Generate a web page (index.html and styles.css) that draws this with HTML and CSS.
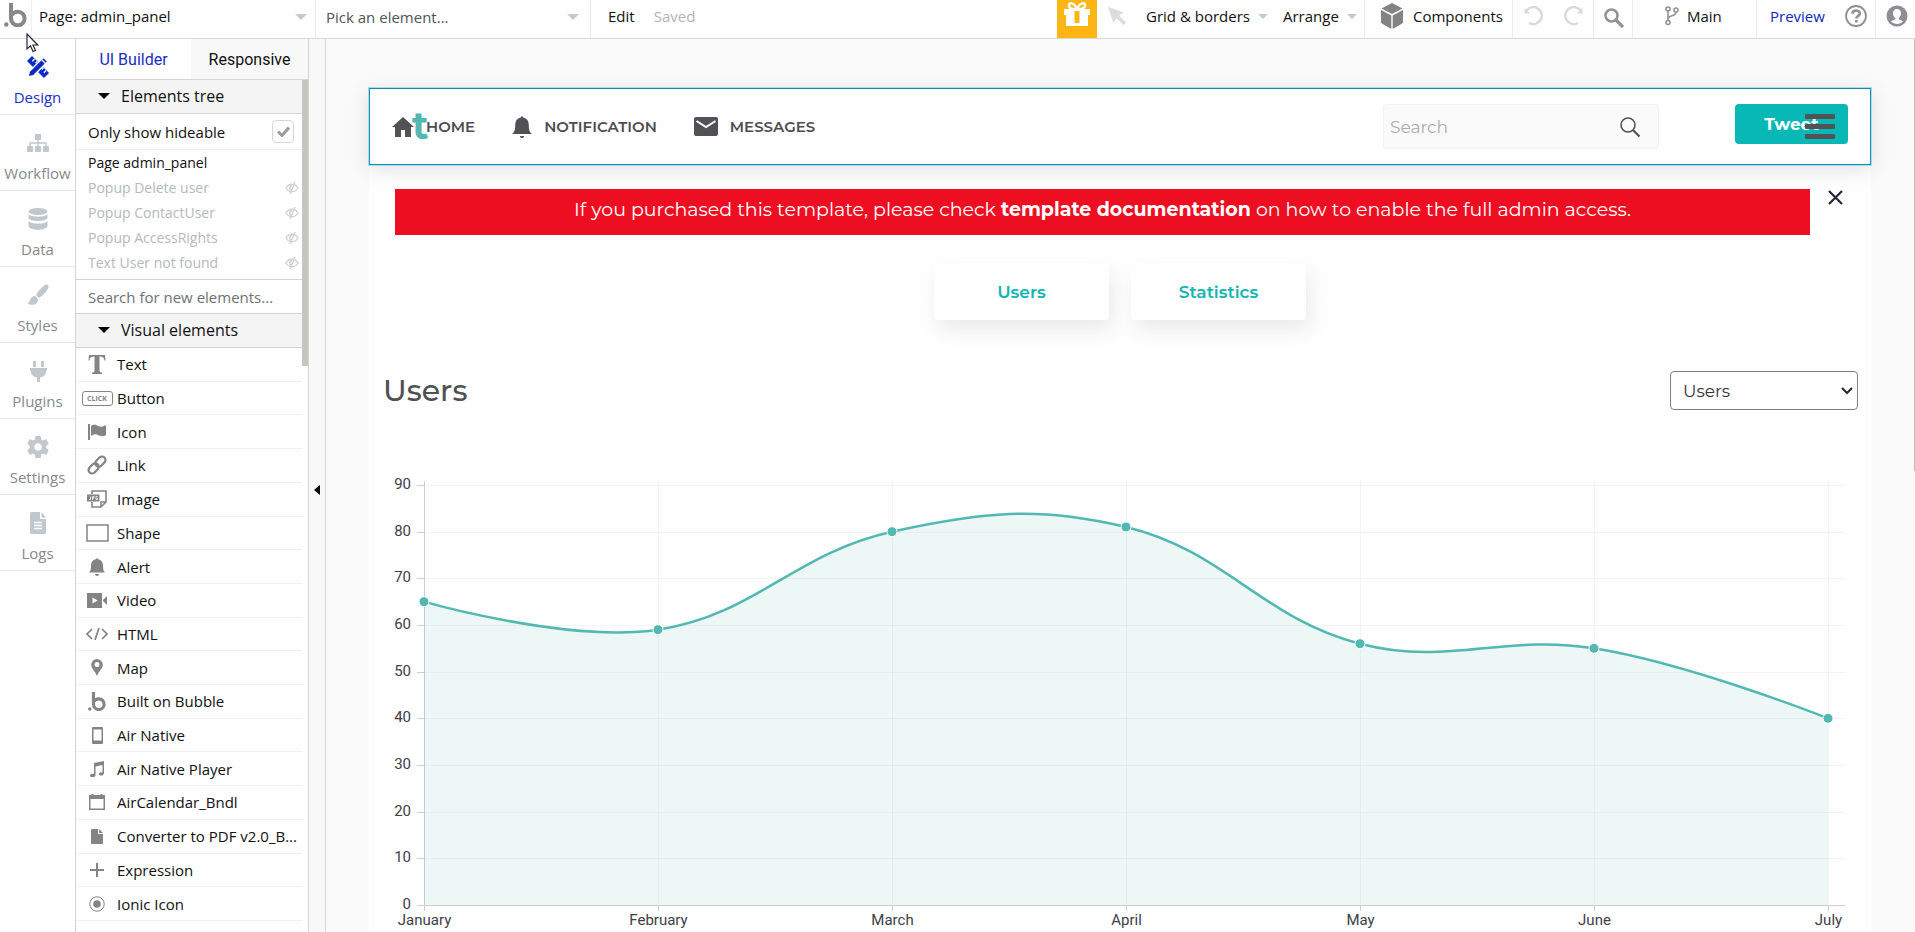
FILE: index.html
```
<!DOCTYPE html>
<html lang="en">
<head>
  <meta charset="UTF-8">
  <meta name="viewport" content="width=device-width, initial-scale=1.0">
  <title>admin_panel | Bubble Editor</title>
  <link rel="stylesheet" href="styles.css">
</head>
<body>

  <!-- Top bar -->
  <header class="topbar">
    <a href="#" class="logo" aria-label="Bubble">
      <svg width="23" height="24" viewBox="0 0 23 24"><circle cx="2.300" cy="21.500" r="2.200" fill="#8a8785"/><path d="M7 0v15.500a6.800 6.800 0 1 0 6.800-6.800c-3 0-5 1.500-6 3.500" fill="none" stroke="#8a8785" stroke-width="4"/></svg>
    </a>
    <div class="dropdown page-select">
      <select aria-label="Page"><option>Page: admin_panel</option></select>
    </div>
    <div class="dropdown element-select">
      <select aria-label="Element"><option>Pick an element...</option></select>
    </div>
    <button class="edit">Edit</button>
    <span class="saved">Saved</span>

    <div class="topbar-right">
      <button class="gift" aria-label="Gift">
        <svg width="28" height="28" viewBox="0 0 28 28"><g fill="#fff"><path d="M1 8h26v6H1zM3 14h22v11H3z"/></g><path d="M14 8C11 1 5 1 6 5s5 3 8 3 7 1 8-3-5-4-8 3z" fill="none" stroke="#fff" stroke-width="2.500"/><path d="M11.500 10h5v12h-5z" fill="#fdb515"/></svg>
      </button>
      <button class="pointer" aria-label="Select">
        <svg width="18" height="18" viewBox="0 0 18 18"><path d="M0 0l16 5.500-5 3 7 7-2.500 2.500-7-7-3 5z" fill="#dbdddc"/></svg>
      </button>
      <button class="menu grid-menu">Grid &amp; borders</button>
      <button class="menu arrange-menu">Arrange</button>
      <button class="components">
        <svg width="24" height="26" viewBox="0 0 24 26"><g fill="#858381"><path d="M12 0l10.500 5.500L12 11 1.500 5.500z"/><path d="M1 7l10.300 5.400V26L1 20z"/><path d="M23 7l-10.300 5.400V26L23 20z"/></g></svg>
        Components
      </button>
      <div class="history">
        <button aria-label="Undo"><svg width="20" height="20" viewBox="0 0 20 20"><path d="M2 5.200A8.500 8.500 0 1 1 5 17" fill="none" stroke="#d8dbda" stroke-width="2.500"/><path d="M.5 2v5.500H6z" fill="#d8dbda"/></svg></button>
        <button aria-label="Redo"><svg width="20" height="20" viewBox="0 0 20 20"><path d="M18 5.200A8.500 8.500 0 1 0 15 17" fill="none" stroke="#d8dbda" stroke-width="2.500"/><path d="M19.500 2v5.500H14z" fill="#d8dbda"/></svg></button>
      </div>
      <button class="find" aria-label="Find">
        <svg width="20" height="20" viewBox="0 0 20 20"><circle cx="7.500" cy="7.500" r="6" fill="none" stroke="#929296" stroke-width="2.500"/><path d="M12 12l7 7" stroke="#929296" stroke-width="3.200"/></svg>
      </button>
      <button class="branch">
        <svg width="14" height="20" viewBox="0 0 14 20"><g fill="none" stroke="#929296" stroke-width="1.600"><circle cx="3" cy="3" r="2"/><circle cx="3" cy="16.500" r="2"/><circle cx="11" cy="4" r="2"/><path d="M3 5v9.500M11 6c0 5-8 2.500-8 7.500"/></g></svg>
        Main
      </button>
      <a href="#" class="preview">Preview</a>
      <button class="help" aria-label="Help">
        <svg width="22" height="22" viewBox="0 0 22 22"><circle cx="11" cy="11" r="10" fill="none" stroke="#8e8e95" stroke-width="1.800"/><path d="M7.500 8.800c0-4.500 7.300-4.300 7.300-.3 0 2.700-3.500 2.500-3.500 5" fill="none" stroke="#8e8e95" stroke-width="2.600"/><path d="M10 15h2.700v2.500H10z" fill="#8e8e95"/></svg>
      </button>
      <button class="account" aria-label="Account">
        <svg width="22" height="22" viewBox="0 0 22 22"><circle cx="11" cy="11" r="10.500" fill="#8e8e95"/><path d="M11 4c-2.500 0-4 1.800-4 4.200 0 2 .9 3.800 2.200 4.600v1.400L5 16.200c1.500 1.700 3.600 2.800 6 2.800s4.500-1.100 6-2.800l-4.200-2v-1.400C14.100 12 15 10.200 15 8.200 15 5.800 13.500 4 11 4z" fill="#fff"/></svg>
      </button>
    </div>
  </header>

  <div class="workspace">
    <!-- Main navigation -->
    <nav class="sidenav">
      <a href="#" class="active">
        <svg width="22" height="22" viewBox="0 0 22 22"><path d="M5 0l17 17-5 5L0 5z" fill="#0b2bc6"/><path d="M7.500 3L5.300 5.200M10 5.500L8.500 7M19 14.500l-2.200 2.200M16.500 12L15 13.500" stroke="#fff" stroke-width="1.300"/><path d="M16.500 1.200l4.300 4.300L6.500 19.800 1 21l1.200-5.500z" fill="#0b2bc6" stroke="#fff" stroke-width="1.500"/><path d="M14.500 3.500l4 4" stroke="#fff" stroke-width="1.200"/></svg>
        Design
      </a>
      <a href="#">
        <svg width="22" height="22" viewBox="0 0 22 22"><path d="M8 2h6v6H8z"/><path d="M11 7v8M3 15v-4h16v4" fill="none" stroke="#c1c8cd" stroke-width="1.500"/><rect y="14" width="6" height="6" rx="1"/><rect x="8" y="14" width="6" height="6" rx="1"/><rect x="16" y="14" width="6" height="6" rx="1"/></svg>
        Workflow
      </a>
      <a href="#">
        <svg width="22" height="22" viewBox="0 0 22 22"><ellipse cx="11" cy="3.500" rx="9.500" ry="3.500"/><path d="M1.500 6c2 3.500 17 3.500 19 0v4c-1 4-18 4-19 0zM1.500 13c2 3.500 17 3.500 19 0v5c-1 5-18 5-19 0z"/></svg>
        Data
      </a>
      <a href="#">
        <svg width="22" height="22" viewBox="0 0 22 22"><path d="M18 1c2-1.500 4 0 3.500 2-.5 3-5 8-9.500 11l-3-3c2-4 6-8 9-10zM8 12l3.200 3.200C11 20 6 23 0 19c2 0 2.500-1 3-3s2.500-4 5-4z"/></svg>
        Styles
      </a>
      <a href="#">
        <svg width="22" height="22" viewBox="0 0 22 22"><path d="M6 1h3v6H6zM14 1h3v6h-3zM3 8h17v3h-1c0 4-2.500 6-6 6.500V22h-3v-4.500C6.500 17 4 15 4 11H3z"/></svg>
        Plugins
      </a>
      <a href="#">
        <svg width="22" height="22" viewBox="2 2 20 20"><path d="M19.430 12.980c.04-.32.070-.64.070-.98s-.03-.66-.07-.98l2.110-1.650c.19-.15.240-.42.120-.64l-2-3.460c-.12-.22-.39-.3-.61-.22l-2.490 1c-.52-.4-1.080-.73-1.690-.98l-.38-2.650C14.460 2.180 14.250 2 14 2h-4c-.25 0-.46.180-.49.420l-.38 2.650c-.61.250-1.170.59-1.690.98l-2.490-1c-.23-.09-.49 0-.61.220l-2 3.460c-.13.220-.07.490.12.640l2.110 1.650c-.04.320-.07.650-.07.980s.03.660.07.980l-2.110 1.650c-.19.150-.24.420-.12.640l2 3.460c.12.220.39.300.61.220l2.490-1c.52.400 1.080.730 1.690.980l.38 2.650c.03.240.24.420.49.420h4c.25 0 .46-.18.490-.42l.38-2.650c.61-.25 1.170-.59 1.690-.98l2.490 1c.23.090.49 0 .61-.22l2-3.460c.12-.22.070-.49-.12-.64zM12 15.500c-1.930 0-3.500-1.570-3.500-3.500s1.570-3.500 3.500-3.500 3.500 1.570 3.500 3.500-1.570 3.500-3.500 3.500z"/></svg>
        Settings
      </a>
      <a href="#">
        <svg width="22" height="22" viewBox="0 0 22 22"><path d="M4.500 0H13v7h6v13.500a1.500 1.500 0 0 1-1.500 1.500h-13A1.500 1.500 0 0 1 3 20.500v-19A1.500 1.500 0 0 1 4.500 0zM14.500 0L19 5.500h-4.500z"/><path d="M7 10.500h8M7 13.500h8M7 16.500h8" stroke="#fff" stroke-width="1.300"/></svg>
        Logs
      </a>
    </nav>

    <!-- Palette -->
    <aside class="palette">
      <div class="tabs">
        <button class="tab selected">UI Builder</button>
        <button class="tab">Responsive</button>
      </div>
      <div class="palette-scroll">
        <div class="palette-content">
          <h2 class="section-title">Elements tree</h2>
          <label class="hideable">
            Only show hideable
            <input type="checkbox" checked>
          </label>
          <ul class="tree">
            <li class="current">Page admin_panel</li>
            <li>Popup Delete user <svg width="14" height="12" viewBox="0 0 14 12"><use href="#eye"/></svg></li>
            <li>Popup ContactUser <svg width="14" height="12" viewBox="0 0 14 12"><use href="#eye"/></svg></li>
            <li>Popup AccessRights <svg width="14" height="12" viewBox="0 0 14 12"><use href="#eye"/></svg></li>
            <li>Text User not found <svg width="14" height="12" viewBox="0 0 14 12"><use href="#eye"/></svg></li>
          </ul>
          <input type="text" class="element-search" placeholder="Search for new elements..." aria-label="Search for new elements">
          <h2 class="section-title">Visual elements</h2>
          <ul class="elements">
            <li><span class="icon"><svg width="18" height="19" viewBox="0 0 18 19"><path d="M1 0h16l.5 5.500h-1C16 2.500 15 1.500 11.500 1.500v14c0 1.500.7 2 2.500 2V19H4v-1.500c1.800 0 2.500-.5 2.500-2v-14C3 1.500 2 2.500 1.500 5.500h-1z"/></svg></span>Text</li>
            <li><span class="icon"><b class="click">CLICK</b></span>Button</li>
            <li><span class="icon"><svg width="18" height="16" viewBox="0 0 18 16"><path d="M0 0h2v16H0zM3 2c3-2 5-1 7 0s5 1 8-1v10c-3 2-6 1-8 0s-4-1-7 1z"/></svg></span>Icon</li>
            <li><span class="icon"><svg width="20" height="20" viewBox="0 0 20 20"><g transform="rotate(-45 10 10)" fill="none" stroke="#868482" stroke-width="2.200"><rect x="-.5" y="6.500" width="11.500" height="7" rx="3.500"/><rect x="9" y="6.500" width="11.500" height="7" rx="3.500"/></g></svg></span>Link</li>
            <li><span class="icon"><svg width="20" height="18" viewBox="0 0 20 18"><path d="M5 4V1h14v11l-5 5H5v-5M19 12h-5v5" fill="none" stroke="#868482" stroke-width="1.600"/><path d="M0 4.500h12.500v7H0z"/><path d="M2 9.500h1.500v-3M5.500 10V6.500H7V8H5.500M10.500 6.500H9v3h1.500V8" fill="none" stroke="#fff" stroke-width=".8"/></svg></span>Image</li>
            <li><span class="icon"><svg width="23" height="18" viewBox="0 0 23 18"><rect x="1" y="1" width="21" height="16" fill="none" stroke="#868482" stroke-width="1.500"/></svg></span>Shape</li>
            <li><span class="icon"><svg width="16" height="18" viewBox="0 0 16 18"><path d="M8 0l1.200 1.300C12.500 2 14 4.500 14 7.500c0 4 .5 5.500 2 7H0c1.500-1.500 2-3 2-7 0-3 1.500-5.500 4.800-6.200zM6 16h4c0 2.500-4 2.500-4 0z"/></svg></span>Alert</li>
            <li><span class="icon"><svg width="20" height="15" viewBox="0 0 20 15"><path d="M0 0h15v15H0zM16 7l4-4v9l-4-4z"/><path d="M5.500 4.500v6l5-3z" fill="#fff"/></svg></span>Video</li>
            <li><span class="icon"><svg width="22" height="12" viewBox="0 0 22 12"><path d="M6 1L1 6l5 5M16 1l5 5-5 5M13 0L9 12" fill="none" stroke="#868482" stroke-width="1.700"/></svg></span>HTML</li>
            <li><span class="icon"><svg width="12" height="17" viewBox="0 0 12 17"><path fill-rule="evenodd" d="M6 0a5.800 5.800 0 0 1 5.800 5.800C11.800 9.500 8 12 6 17 4 12 .2 9.500.2 5.800A5.800 5.800 0 0 1 6 0zm0 3a2.500 2.500 0 1 0 0 5 2.500 2.500 0 0 0 0-5z"/></svg></span>Map</li>
            <li><span class="icon"><svg width="18" height="19" viewBox="0 0 23 24"><circle cx="2.300" cy="21.500" r="2.200"/><path d="M7 0v15.500a6.800 6.800 0 1 0 6.800-6.800c-3 0-5 1.500-6 3.500" fill="none" stroke="#868482" stroke-width="4"/></svg></span>Built on Bubble</li>
            <li><span class="icon"><svg width="11" height="17" viewBox="0 0 11 17"><path fill-rule="evenodd" d="M1 0h9a1 1 0 0 1 1 1v15a1 1 0 0 1-1 1H1a1 1 0 0 1-1-1V1a1 1 0 0 1 1-1zm.5 2.500v11h8v-11z"/></svg></span>Air Native</li>
            <li><span class="icon"><svg width="14" height="16" viewBox="0 0 14 16"><path d="M4 2l10-2v12c0 3-5 3.500-5 1 0-1.500 2-2 3.500-1.700V4L5.500 5.500V14c0 3-5.500 3-5.500.5 0-1.500 2-2.200 4-1.700z"/></svg></span>Air Native Player</li>
            <li><span class="icon"><svg width="16" height="16" viewBox="0 0 16 16"><path fill-rule="evenodd" d="M0 1h2.500V0h2v1h7V0h2v1H16v15H0zm1.500 4v9.500h13V5z"/></svg></span>AirCalendar_Bndl</li>
            <li><span class="icon"><svg width="12" height="15" viewBox="0 0 12 15"><path d="M1 0h6v5h5v9a1 1 0 0 1-1 1H1a1 1 0 0 1-1-1V1a1 1 0 0 1 1-1zM8 0l4 4H8z"/></svg></span>Converter to PDF v2.0_B...</li>
            <li><span class="icon"><svg width="14" height="14" viewBox="0 0 14 14"><path d="M6 0h2v6h6v2H8v6H6V8H0V6h6z"/></svg></span>Expression</li>
            <li><span class="icon"><svg width="16" height="16" viewBox="0 0 16 16"><circle cx="8" cy="8" r="7.200" fill="none" stroke="#868482"/><circle cx="8" cy="8" r="3.800"/></svg></span>Ionic Icon</li>
          </ul>
        </div>
        <div class="scrollbar"></div>
      </div>
    </aside>

    <button class="collapse" aria-label="Collapse panel"></button>

    <!-- Canvas -->
    <main class="canvas">
      <div class="page">
        <div class="page-header">
          <span class="brand">t</span>
          <a href="#" class="menu-link">
            <svg width="22" height="20" viewBox="0 0 22 20"><path d="M11 0l11 10h-3v10h-6v-7H9v7H3V10H0z"/></svg>
            HOME
          </a>
          <a href="#" class="menu-link">
            <svg width="20" height="22" viewBox="0 0 20 22"><path d="M10 0l1.400 1.600C15 2.500 16.800 5 16.800 9c0 5 .7 7 3.200 9H0c2.500-2 3.200-4 3.200-9 0-4 1.800-6.500 5.400-7.400zM8 20h4c0 2.700-4 2.700-4 0z"/></svg>
            NOTIFICATION
          </a>
          <a href="#" class="menu-link">
            <svg width="24" height="19" viewBox="0 0 24 19"><rect width="24" height="19" rx="2"/><path d="M2.500 4l9.500 6 9.500-6" fill="none" stroke="#fff" stroke-width="2"/></svg>
            MESSAGES
          </a>
          <div class="search">
            <input type="text" placeholder="Search" aria-label="Search">
            <svg width="20" height="20" viewBox="0 0 20 20"><circle cx="8" cy="8" r="7" fill="none" stroke="#505256" stroke-width="1.600"/><path d="M13 13l6.500 6.500" stroke="#505256" stroke-width="2.200"/></svg>
          </div>
          <div class="tweet-wrap">
            <button class="tweet">Tweet</button>
            <button class="burger" aria-label="Menu"><i></i><i></i><i></i></button>
          </div>
        </div>

        <div class="notice-row">
          <p class="notice">If you purchased this template, please check <strong>template documentation</strong> on how to enable the full admin access.</p>
          <button class="close" aria-label="Close">
            <svg width="15" height="15" viewBox="0 0 15 15"><path d="M1 1l13 13M14 1L1 14" stroke="#25263a" stroke-width="2.200"/></svg>
          </button>
        </div>

        <div class="view-buttons">
          <button>Users</button>
          <button>Statistics</button>
        </div>

        <div class="chart-head">
          <h1>Users</h1>
          <div class="metric">
            <select aria-label="Metric"><option>Users</option><option>Statistics</option></select>
            <svg width="12" height="8" viewBox="0 0 12 8"><path d="M1 1l5 5 5-5" fill="none" stroke="#2b2b3a" stroke-width="2.200"/></svg>
          </div>
        </div>

        <svg class="chart" id="chart" role="img" aria-label="Users per month"></svg>
      </div>
      <div class="canvas-scroll"></div>
    </main>
  </div>

  <!-- Mouse pointer -->
  <svg class="mouse" width="13" height="20" viewBox="0 0 13 20"><path d="M1 1v15l3.500-3.200L7 18.500l2.500-1-2.500-5.500h4.800z" fill="#fff" stroke="#25253a" stroke-width="1.200"/></svg>

  <svg class="defs" width="0" height="0">
    <defs>
      <g id="eye" fill="none" stroke="#cfd3d3" stroke-width="1.400"><path d="M1 6c3-5 9-5 12 0-3 5-9 5-12 0z"/><path d="M7 3.500c-3 .5-3 4.500 0 5M10 0L5 12"/></g>
    </defs>
  </svg>

  <script src="script.js"></script>
</body>
</html>
```
FILE: styles.css
```
* {
  box-sizing: border-box;
}
body {
  margin: 0;
  height: 100vh;
  display: flex;
  flex-direction: column;
  overflow: hidden;
  font-family: "Open Sans", sans-serif;
  font-size: 15px;
  color: #111;
  background-color: #fefefe;
}
button, input, select {
  font: inherit;
  color: inherit;
  border: none;
  background: none;
  margin: 0;
  padding: 0;
}
button {
  cursor: pointer;
}
a {
  color: inherit;
  text-decoration: none;
}
svg {
  display: block;
  flex: none;
}
ul {
  list-style: none;
  margin: 0;
  padding: 0;
}

/* Top bar */
.topbar {
  display: flex;
  flex: none;
  height: 39px;
  border-bottom: 1px solid #d8d8d8;
}
.topbar button,
.preview,
.saved {
  display: flex;
  align-items: center;
  white-space: nowrap;
  padding-bottom: 6px;
}
.logo {
  width: 32px;
  padding: 3px 4px;
  border-right: 1px solid #edf1f2;
}
.dropdown {
  position: relative;
  border-right: 1px solid #e8eeee;
}
.dropdown select {
  appearance: none;
  width: 100%;
  height: 34px;
}
.dropdown::after,
.menu::after {
  content: "";
  border: 6px solid transparent;
  border-top-color: #c2cacf;
  border-bottom: none;
}
.dropdown::after {
  position: absolute;
  right: 8px;
  top: 14px;
  pointer-events: none;
}
.menu::after {
  border-width: 5px;
  border-bottom: none;
  margin-left: 8px;
}
.page-select {
  width: 284px;
  padding-left: 7px;
}
.page-select select {
  height: 32px;
}
.element-select {
  width: 275px;
  padding-left: 10px;
  color: #4d5558;
}
.element-select::after {
  right: 11px;
}
.edit {
  margin: 0 19px 0 17px;
}
.saved {
  color: #b0b5b5;
}
.topbar-right {
  display: flex;
  margin-left: auto;
}
.topbar .gift {
  width: 40px;
  justify-content: center;
  background-color: #fdb515;
  padding-bottom: 8px;
}
.topbar .pointer {
  width: 49px;
  padding-left: 11px;
}
.grid-menu {
  width: 137px;
}
.arrange-menu {
  width: 81px;
}
.components {
  width: 148px;
  gap: 9px;
  border-left: 1px solid #e8eeee !important;
  padding-left: 15px !important;
}
.history {
  display: flex;
  width: 81px;
  gap: 19px;
  padding-left: 11px;
  border-left: 1px solid #e8eeee;
}
.find {
  width: 39px;
  border-left: 1px solid #e8eeee !important;
  padding-left: 10px !important;
}
.topbar .find {
  padding-bottom: 2px;
}
.branch {
  width: 124px;
  gap: 8px;
  border-left: 1px solid #e8eeee !important;
  padding-left: 32px !important;
}
.preview {
  width: 89px;
  padding-left: 13px;
  border-left: 1px solid #e8eeee;
  color: #0f27b8;
}
.help {
  width: 30px;
}
.account {
  width: 40px;
  border-left: 1px solid #e8eeee !important;
  padding-left: 10px !important;
}

.workspace {
  display: flex;
  flex: 1;
  min-height: 0;
}

/* Main navigation */
.sidenav {
  width: 76px;
  flex: none;
  border-right: 1px solid #d4d4d4;
}
.sidenav a {
  display: flex;
  flex-direction: column;
  align-items: center;
  gap: 9px;
  height: 76px;
  padding-top: 17px;
  border-bottom: 1px solid #e0ebf2;
  font-size: 15px;
  color: #868a8c;
}
.sidenav svg {
  fill: #c1c8cd;
}
.sidenav .active {
  color: #1a2fc4;
}

/* Palette */
.palette {
  display: flex;
  flex-direction: column;
  width: 233px;
  flex: none;
  border-right: 1px solid #d4d4d4;
}
.tabs {
  display: flex;
  height: 41px;
  border-bottom: 1px solid #d4d4d4;
  font-family: Roboto, sans-serif;
  font-size: 16px;
}
.tab {
  flex: 1;
  background-color: #f8f8f8;
}
.tab.selected {
  flex: none;
  width: 115px;
  background-color: #fefefe;
  color: #1a2fc4;
}
.palette-scroll {
  display: flex;
  flex: 1;
  min-height: 0;
}
.palette-content {
  display: flex;
  flex-direction: column;
  flex: 1;
  min-width: 0;
}
.scrollbar {
  width: 6px;
  height: 286px;
  background-color: #c6c6c1;
}
.section-title {
  display: flex;
  align-items: center;
  gap: 11px;
  height: 34px;
  margin: 0;
  padding: 0 0 1px 22px;
  border-bottom: 1px solid #d4d4d4;
  background-color: #f4f4f4;
  font-size: 16px;
  font-weight: 400;
}
.section-title::before {
  content: "";
  border: 6px solid transparent;
  border-top-color: #000;
  border-bottom: none;
}
.hideable {
  display: flex;
  align-items: center;
  justify-content: space-between;
  height: 36px;
  padding: 0 8px 0 12px;
  border-bottom: 1px solid #eef0f0;
}
.hideable input {
  appearance: none;
  width: 22px;
  height: 23px;
  border: 1px solid #d6d8d8;
  border-radius: 4px;
  background: url("data:image/svg+xml,%3Csvg xmlns='http://www.w3.org/2000/svg' viewBox='0 0 13 11'%3E%3Cpath d='M1 5.5l4 4L12 1.500' fill='none' stroke='%23999da0' stroke-width='3'/%3E%3C/svg%3E") center / 13px 11px no-repeat;
}
.tree {
  padding: 0 3px 4px 12px;
  border-bottom: 1px solid #d4d4d4;
  font-size: 14px;
  color: #b3baba;
}
.tree li {
  display: flex;
  align-items: center;
  justify-content: space-between;
  height: 25px;
}
.tree .current {
  color: #111;
}
.element-search {
  height: 34px;
  padding-left: 12px;
  border-bottom: 1px solid #d4d4d4;
  font-size: 15px;
}
.element-search::placeholder {
  color: #6d7374;
}
.elements {
  display: flex;
  flex-direction: column;
  flex: 1;
  padding-bottom: 11px;
}
.elements li {
  display: flex;
  flex: 1;
  align-items: center;
  min-height: 30px;
  padding-left: 4px;
  border-bottom: 1px solid #f0f2f2;
  white-space: nowrap;
}
.icon {
  display: flex;
  justify-content: center;
  width: 34px;
  margin-right: 3px;
  fill: #868482;
}
.click {
  width: 31px;
  border: 1px solid #868482;
  border-radius: 3px;
  font-size: 7px;
  line-height: 13px;
  text-align: center;
  color: #868482;
}
.collapse {
  width: 17px;
  flex: none;
  display: flex;
  align-items: center;
  padding-top: 8px;
  background-color: #f8f8f8;
  border-right: 1px solid #d8d8d8;
}
.collapse::before {
  content: "";
  margin-left: 5px;
  border: 5px solid transparent;
  border-right: 6px solid #000;
  border-left: none;
}

/* Canvas */
.canvas {
  position: relative;
  flex: 1;
  min-width: 0;
  padding: 49px 44px 0 43px;
  background-color: #fafafa;
}
.canvas-scroll {
  position: absolute;
  right: 0;
  top: 0;
  width: 1px;
  height: 432px;
  background-color: #bdbdbd;
}
.page {
  height: 100%;
  background-color: #fefefe;
  font-family: Montserrat, Inter, sans-serif;
}
.page-header {
  position: relative;
  display: flex;
  align-items: center;
  height: 77px;
  padding: 0 22px;
  border: 1px solid #0b8fc2;
  outline: 1px solid #b5d8e3;
  background-color: #fefefe;
  box-shadow: 0 4px 20px rgba(0, 0, 0, 0.12);
}
.brand {
  position: absolute;
  left: 42px;
  top: 14px;
  font-size: 38px;
  line-height: 46px;
  font-weight: 700;
  color: #52b8b1;
}
.menu-link {
  display: flex;
  align-items: center;
  gap: 12px;
  margin-right: 37px;
  font-size: 15px;
  font-weight: 600;
  color: #4c4d50;
  fill: #505256;
}
.search {
  display: flex;
  align-items: center;
  width: 276px;
  height: 45px;
  margin-left: auto;
  padding: 0 18px 0 6px;
  border: 1px solid #f3f3f3;
  border-radius: 4px;
  background-color: #fafafa;
}
.search input {
  flex: 1;
  min-width: 0;
  font-size: 17px;
}
.search input::placeholder {
  color: #a9adaf;
}
.tweet-wrap {
  position: relative;
  margin: 0 0 5px 76px;
}
.tweet {
  width: 113px;
  height: 40px;
  border-radius: 4px;
  background-color: #08b8b6;
  color: #fff;
  font-size: 17px;
  font-weight: 700;
}
.burger {
  position: absolute;
  right: 13px;
  top: 10px;
  display: flex;
  flex-direction: column;
  gap: 5px;
  width: 30px;
}
.burger i {
  width: 30px;
  height: 5px;
  border-radius: 1px;
  background-color: #525355;
}
.notice-row {
  display: flex;
  align-items: flex-start;
  gap: 18px;
  padding: 24px 28px 0 26px;
}
.notice {
  flex: 1;
  height: 46px;
  margin: 0;
  background-color: #ee0e22;
  color: #fff;
  font-size: 19px;
  line-height: 42px;
  text-align: center;
}
.close {
  margin-top: 1px;
}
.view-buttons {
  display: flex;
  justify-content: center;
  gap: 22px;
  padding-top: 28px;
}
.view-buttons button {
  width: 175px;
  height: 57px;
  border-radius: 4px;
  background-color: #fefefe;
  box-shadow: 4px 10px 20px rgba(0, 0, 0, 0.08);
  color: #12b5b2;
  font-size: 17px;
  font-weight: 600;
}
.chart-head {
  display: flex;
  align-items: center;
  justify-content: space-between;
  padding: 51px 13px 0 14px;
}
.chart-head h1 {
  margin: 0;
  font-size: 30px;
  line-height: 39px;
  font-weight: 500;
  color: #4f5153;
}
.metric {
  position: relative;
  width: 188px;
}
.metric select {
  appearance: none;
  width: 100%;
  height: 39px;
  padding-left: 12px;
  border: 1px solid #7d7d80;
  border-radius: 4px;
  font-size: 17px;
  color: #34343f;
}
.metric svg {
  position: absolute;
  right: 5px;
  top: 16px;
  pointer-events: none;
}

/* Chart */
.chart {
  width: 100%;
  height: 470px;
  margin-top: 60px;
  font-family: Roboto, sans-serif;
  font-size: 15px;
  fill: #404048;
}
.chart .grid {
  stroke: rgba(0, 0, 0, 0.04);
}
.chart .axis {
  stroke: #cccfd0;
}
.chart .area {
  fill: #52b8b1;
  fill-opacity: 0.1;
}
.chart .line {
  fill: none;
  stroke: #52b8b1;
  stroke-width: 2.5;
}
.chart .point {
  fill: #52b8b1;
  stroke: #fff;
}

.mouse {
  position: absolute;
  left: 26px;
  top: 33px;
}
.defs {
  position: absolute;
}
```
FILE: script.js
```
const months = ['January', 'February', 'March', 'April', 'May', 'June', 'July'];
const users = [65, 59, 80, 81, 56, 55, 40];
const chart = document.getElementById('chart');

function add(name, attrs, text) {
  const el = document.createElementNS('http://www.w3.org/2000/svg', name);
  for (const key in attrs) el.setAttribute(key, attrs[key]);
  if (text !== undefined) el.textContent = text;
  chart.appendChild(el);
}

// Control points before and after a point of the curve
function controls(prev, cur, next) {
  const before = Math.hypot(cur.x - prev.x, cur.y - prev.y);
  const after = Math.hypot(next.x - cur.x, next.y - cur.y);
  const a = 0.4 * before / (before + after);
  const b = 0.4 * after / (before + after);
  return [
    { x: cur.x - a * (next.x - prev.x), y: cur.y - a * (next.y - prev.y) },
    { x: cur.x + b * (next.x - prev.x), y: cur.y + b * (next.y - prev.y) }
  ];
}

function drawChart() {
  chart.innerHTML = '';
  const width = chart.clientWidth;
  const left = 55;
  const right = width - 26;
  const top = 15;
  const bottom = 435;
  const step = (width - 43 - left) / (months.length - 1);
  const points = users.map((v, i) => ({ x: left + i * step, y: bottom - v * (bottom - top) / 90 }));

  for (let v = 0; v <= 90; v += 10) {
    const y = Math.round(bottom - v * (bottom - top) / 90) + 0.5;
    add('line', { class: 'grid', x1: left, x2: right, y1: y, y2: y });
    add('line', { class: 'axis', x1: left - 7, x2: left, y1: y, y2: y });
    add('text', { x: left - 13, y: y + 3, 'text-anchor': 'end' }, v);
  }
  months.forEach((month, i) => {
    const x = Math.round(points[i].x) + 0.5;
    add('line', { class: 'grid', x1: x, x2: x, y1: top - 4, y2: bottom });
    add('line', { class: 'axis', x1: x, x2: x, y1: bottom, y2: bottom + 6 });
    add('text', { x: x, y: bottom + 20, 'text-anchor': 'middle' }, month);
  });
  add('line', { class: 'axis', x1: left + 0.5, x2: left + 0.5, y1: top - 4, y2: bottom });
  add('line', { class: 'axis', x1: left, x2: right, y1: bottom + 0.5, y2: bottom + 0.5 });

  const last = points.length - 1;
  const ctrl = points.map((p, i) => i === 0 || i === last ? [p, p] : controls(points[i - 1], p, points[i + 1]));
  let d = `M${points[0].x} ${points[0].y}`;
  for (let i = 1; i <= last; i++) {
    const c1 = ctrl[i - 1][1];
    const c2 = ctrl[i][0];
    d += `C${c1.x} ${c1.y} ${c2.x} ${c2.y} ${points[i].x} ${points[i].y}`;
  }
  add('path', { class: 'area', d: `${d}V${bottom}H${left}Z` });
  add('path', { class: 'line', d });
  points.forEach(p => add('circle', { class: 'point', cx: p.x, cy: p.y, r: 5 }));
}

drawChart();
window.addEventListener('resize', drawChart);
```
